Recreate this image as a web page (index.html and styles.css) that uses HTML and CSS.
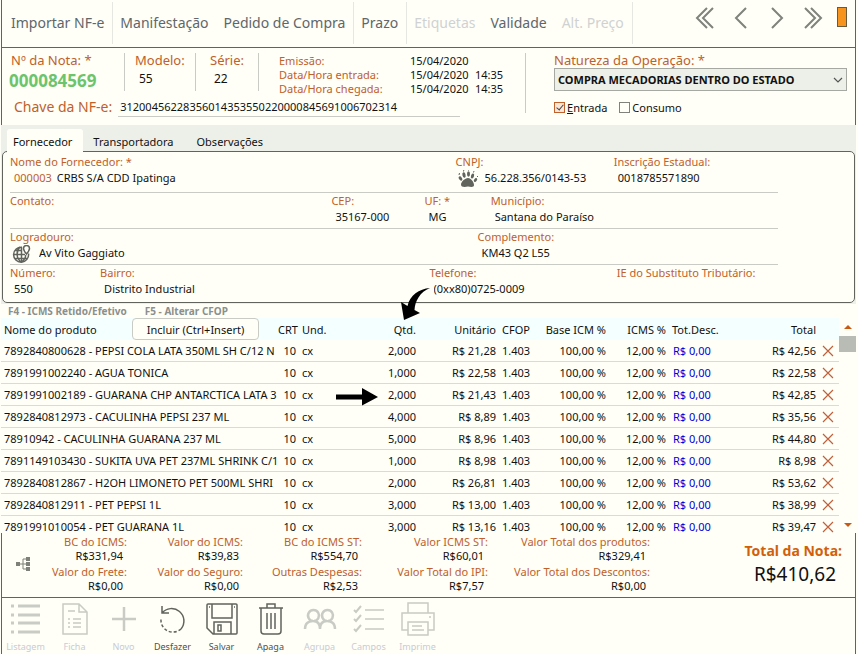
FILE: index.html
```html
<!DOCTYPE html>
<html lang="pt-BR">
<head>
    <meta charset="UTF-8">
    <meta name="viewport" content="width=device-width, initial-scale=1.0">
    <title>Nota Fiscal de Entrada</title>
    <link rel="stylesheet" href="styles.css">
</head>
<body>
    <!-- Shared icon for the delete buttons in the product rows -->
    <svg class="symbols" width="0" height="0">
        <symbol id="icon-delete" viewBox="0 0 12 12">
            <path d="M1 1L11 11M11 1L1 11" fill="none" stroke="#c0603a" stroke-width="1.2"/>
        </symbol>
    </svg>

    <div class="app">
        <!-- Top toolbar -->
        <header class="toolbar framed">
            <nav class="menu">
                <button class="menu-button">Importar NF-e</button>
                <button class="menu-button divided">Manifestação</button>
                <button class="menu-button">Pedido de Compra</button>
                <button class="menu-button divided">Prazo</button>
                <button class="menu-button divided" disabled>Etiquetas</button>
                <button class="menu-button">Validade</button>
                <button class="menu-button" disabled>Alt. Preço</button>
                <span class="menu-end"></span>
            </nav>
            <div class="pager">
                <button class="pager-button" aria-label="Primeiro">
                    <svg width="20" height="22" viewBox="0 0 20 22"><path d="M12 1L2 11L12 21M18 1L8 11L18 21"/></svg>
                </button>
                <button class="pager-button" aria-label="Anterior">
                    <svg width="20" height="22" viewBox="0 0 20 22"><path d="M15 1L5 11L15 21"/></svg>
                </button>
                <button class="pager-button" aria-label="Próximo">
                    <svg width="20" height="22" viewBox="0 0 20 22"><path d="M5 1L15 11L5 21"/></svg>
                </button>
                <button class="pager-button" aria-label="Último">
                    <svg width="20" height="22" viewBox="0 0 20 22"><path d="M2 1L12 11L2 21M8 1L18 11L8 21"/></svg>
                </button>
                <span class="marker"></span>
            </div>
        </header>

        <!-- Invoice data -->
        <section class="note framed">
            <div class="note-left">
                <div class="note-top">
                    <div class="note-field number">
                        <label class="big-label" for="nota">Nº da Nota: *</label>
                        <input class="note-number" id="nota" value="000084569">
                    </div>
                    <div class="note-field model">
                        <label class="big-label" for="modelo">Modelo:</label>
                        <input class="note-input" id="modelo" value="55">
                    </div>
                    <div class="note-field series">
                        <label class="big-label" for="serie">Série:</label>
                        <input class="note-input" id="serie" value="22">
                    </div>
                    <div class="dates">
                        <label for="emissao">Emissão:</label>
                        <input id="emissao" value="15/04/2020">
                        <span></span>
                        <label for="entrada-data">Data/Hora entrada:</label>
                        <input id="entrada-data" value="15/04/2020">
                        <input aria-label="Hora entrada" value="14:35">
                        <label for="chegada-data">Data/Hora chegada:</label>
                        <input id="chegada-data" value="15/04/2020">
                        <input aria-label="Hora chegada" value="14:35">
                    </div>
                </div>
                <div class="access-key">
                    <label class="big-label" for="chave">Chave da NF-e:</label>
                    <input id="chave" value="31200456228356014353550220000845691006702314">
                </div>
            </div>
            <div class="note-right">
                <label class="big-label" for="natureza">Natureza da Operação: *</label>
                <div class="select-box">
                    <select id="natureza">
                        <option>COMPRA MECADORIAS DENTRO DO ESTADO</option>
                    </select>
                    <svg class="select-arrow" width="10" height="6" viewBox="0 0 10 6"><path d="M1 1L5 5L9 1" fill="none" stroke="#555" stroke-width="1.2"/></svg>
                </div>
                <div class="checks">
                    <label class="check"><input type="checkbox" checked><span><u>E</u>ntrada</span></label>
                    <label class="check"><input type="checkbox"><span>Consumo</span></label>
                </div>
            </div>
        </section>

        <!-- Supplier tabs -->
        <section class="tabs-area">
            <div class="tabs" role="tablist">
                <button class="tab active" role="tab" aria-selected="true">Fornecedor</button>
                <button class="tab" role="tab">Transportadora</button>
                <button class="tab" role="tab">Observações</button>
            </div>
            <div class="panel">
                <div class="fields row-name">
                    <div class="field">
                        <label for="fornecedor">Nome do Fornecedor: *</label>
                        <div class="field-value">
                            <span class="code">000003</span>
                            <input id="fornecedor" value="CRBS S/A CDD Ipatinga">
                        </div>
                    </div>
                    <div class="field">
                        <label for="cnpj">CNPJ:</label>
                        <div class="field-value with-icon">
                            <svg class="field-icon" width="20" height="18" viewBox="0 0 20 18" fill="#60645c">
                                <path d="M10 8C13 8 16 12 16 15C16 17.500 13 17 10 16.500C7 17 3 17.500 3 14.500C3 12 7 8 10 8Z"/>
                                <ellipse cx="2.500" cy="8.500" rx="1.500" ry="2.300" transform="rotate(-35 2.500 8.500)"/>
                                <ellipse cx="6" cy="5" rx="1.600" ry="2.700" transform="rotate(-12 6 5)"/>
                                <ellipse cx="10.500" cy="4" rx="1.500" ry="2.800"/>
                                <ellipse cx="14.500" cy="6" rx="1.500" ry="2.600" transform="rotate(18 14.500 6)"/>
                                <ellipse cx="17.500" cy="10" rx="1.400" ry="2.200" transform="rotate(35 17.500 10)"/>
                                <path d="M1 5L1.500 3M5.500 1.500L5.800 0M10.500 .6V0M15.500 2.500L16 1M19 7L20 6" stroke="#60645c"/>
                            </svg>
                            <input id="cnpj" value="56.228.356/0143-53">
                        </div>
                    </div>
                    <div class="field">
                        <label for="inscricao">Inscrição Estadual:</label>
                        <div class="field-value"><input id="inscricao" value="0018785571890"></div>
                    </div>
                </div>
                <div class="fields row-city">
                    <div class="field">
                        <label for="contato">Contato:</label>
                        <div class="field-value"><input id="contato" value=""></div>
                    </div>
                    <div class="field">
                        <label for="cep">CEP:</label>
                        <div class="field-value"><input id="cep" value="35167-000"></div>
                    </div>
                    <div class="field">
                        <label for="uf">UF: *</label>
                        <div class="field-value"><input id="uf" value="MG"></div>
                    </div>
                    <div class="field">
                        <label for="municipio">Município:</label>
                        <div class="field-value"><input id="municipio" value="Santana do Paraíso"></div>
                    </div>
                </div>
                <div class="fields row-street">
                    <div class="field">
                        <label for="logradouro">Logradouro:</label>
                        <div class="field-value with-icon">
                            <svg class="field-icon" width="20" height="18" viewBox="0 0 20 18" fill="none" stroke="#60645c" stroke-width="1.500">
                                <path d="M10 2.200A7.500 7.500 0 1 0 16.500 8.500M9.500 2V17M2 9.500H13M3.500 5.500H10M3.500 13.500H15.500M8 2C4 6 4 13 9 17M10 17C13 14 14 12 13.500 10"/>
                                <path d="M14.500 9C12 6 11.500 5 11.500 3.500A3 3 0 0 1 17.500 3.500C17.500 5 17 6 14.500 9Z" fill="#fffff7"/>
                            </svg>
                            <input id="logradouro" value="Av Vito Gaggiato">
                        </div>
                    </div>
                    <div class="field">
                        <label for="complemento">Complemento:</label>
                        <div class="field-value"><input id="complemento" value="KM43 Q2 L55"></div>
                    </div>
                </div>
                <div class="fields row-phone">
                    <div class="field">
                        <label for="numero">Número:</label>
                        <div class="field-value"><input id="numero" value="550"></div>
                    </div>
                    <div class="field">
                        <label for="bairro">Bairro:</label>
                        <div class="field-value"><input id="bairro" value="Distrito Industrial"></div>
                    </div>
                    <div class="field">
                        <label for="telefone">Telefone:</label>
                        <div class="field-value"><input id="telefone" value="(0xx80)0725-0009"></div>
                    </div>
                    <div class="field">
                        <label for="substituto">IE do Substituto Tributário:</label>
                        <div class="field-value"><input id="substituto" value=""></div>
                    </div>
                </div>
            </div>
        </section>

        <div class="hints">
            <span>F4 - ICMS Retido/Efetivo</span>
            <span>F5 - Alterar CFOP</span>
        </div>

        <!-- Product grid -->
        <section class="grid">
            <!-- Arrows pointing at the quantity column -->
            <svg class="arrow-down" width="32" height="34" viewBox="0 0 32 34"><path d="M30 1C19 2 10 8 7.500 19L1 15L4 33L20 26L14.500 23C15 14 20 5 30 1Z"/></svg>
            <svg class="arrow-right" width="42" height="18" viewBox="0 0 42 18"><path d="M0 6.500H26V0L42 9L26 17.500V11.500H0Z"/></svg>
            <table class="products">
                <colgroup>
                    <col>
                    <col class="col-crt">
                    <col class="col-und">
                    <col class="col-qtd">
                    <col class="col-unit">
                    <col class="col-cfop">
                    <col class="col-base">
                    <col class="col-icms">
                    <col class="col-desc">
                    <col class="col-total">
                    <col class="col-delete">
                </colgroup>
                <thead>
                    <tr>
                        <th>
                            <div class="name-head">
                                <span>Nome do produto</span>
                                <button class="add-button">Incluir (Ctrl+Insert)</button>
                            </div>
                        </th>
                        <th class="num">CRT</th>
                        <th>Und.</th>
                        <th class="num">Qtd.</th>
                        <th class="num">Unitário</th>
                        <th>CFOP</th>
                        <th class="num">Base ICM %</th>
                        <th class="num">ICMS %</th>
                        <th>Tot.Desc.</th>
                        <th class="num">Total</th>
                        <th></th>
                    </tr>
                </thead>
                <tbody>
                    <tr>
                        <td>7892840800628 - PEPSI COLA LATA 350ML SH C/12 N</td><td class="num">10</td><td>cx</td><td class="num">2,000</td><td class="num">R$ 21,28</td><td>1.403</td><td class="num">100,00 %</td><td class="num">12,00 %</td><td class="discount">R$ 0,00</td><td class="num">R$ 42,56</td>
                        <td><button class="delete" aria-label="Excluir"><svg width="12" height="12"><use href="#icon-delete"/></svg></button></td>
                    </tr>
                    <tr>
                        <td>7891991002240 - AGUA TONICA</td><td class="num">10</td><td>cx</td><td class="num">1,000</td><td class="num">R$ 22,58</td><td>1.403</td><td class="num">100,00 %</td><td class="num">12,00 %</td><td class="discount">R$ 0,00</td><td class="num">R$ 22,58</td>
                        <td><button class="delete" aria-label="Excluir"><svg width="12" height="12"><use href="#icon-delete"/></svg></button></td>
                    </tr>
                    <tr>
                        <td>7891991002189 - GUARANA CHP ANTARCTICA LATA 3</td><td class="num">10</td><td>cx</td><td class="num">2,000</td><td class="num">R$ 21,43</td><td>1.403</td><td class="num">100,00 %</td><td class="num">12,00 %</td><td class="discount">R$ 0,00</td><td class="num">R$ 42,85</td>
                        <td><button class="delete" aria-label="Excluir"><svg width="12" height="12"><use href="#icon-delete"/></svg></button></td>
                    </tr>
                    <tr>
                        <td>7892840812973 - CACULINHA PEPSI 237 ML</td><td class="num">10</td><td>cx</td><td class="num">4,000</td><td class="num">R$ 8,89</td><td>1.403</td><td class="num">100,00 %</td><td class="num">12,00 %</td><td class="discount">R$ 0,00</td><td class="num">R$ 35,56</td>
                        <td><button class="delete" aria-label="Excluir"><svg width="12" height="12"><use href="#icon-delete"/></svg></button></td>
                    </tr>
                    <tr>
                        <td>78910942 - CACULINHA GUARANA 237 ML</td><td class="num">10</td><td>cx</td><td class="num">5,000</td><td class="num">R$ 8,96</td><td>1.403</td><td class="num">100,00 %</td><td class="num">12,00 %</td><td class="discount">R$ 0,00</td><td class="num">R$ 44,80</td>
                        <td><button class="delete" aria-label="Excluir"><svg width="12" height="12"><use href="#icon-delete"/></svg></button></td>
                    </tr>
                    <tr>
                        <td>7891149103430 - SUKITA UVA PET 237ML SHRINK C/1</td><td class="num">10</td><td>cx</td><td class="num">1,000</td><td class="num">R$ 8,98</td><td>1.403</td><td class="num">100,00 %</td><td class="num">12,00 %</td><td class="discount">R$ 0,00</td><td class="num">R$ 8,98</td>
                        <td><button class="delete" aria-label="Excluir"><svg width="12" height="12"><use href="#icon-delete"/></svg></button></td>
                    </tr>
                    <tr>
                        <td>7892840812867 - H2OH LIMONETO PET 500ML SHRI</td><td class="num">10</td><td>cx</td><td class="num">2,000</td><td class="num">R$ 26,81</td><td>1.403</td><td class="num">100,00 %</td><td class="num">12,00 %</td><td class="discount">R$ 0,00</td><td class="num">R$ 53,62</td>
                        <td><button class="delete" aria-label="Excluir"><svg width="12" height="12"><use href="#icon-delete"/></svg></button></td>
                    </tr>
                    <tr>
                        <td>7892840812911 - PET PEPSI 1L</td><td class="num">10</td><td>cx</td><td class="num">3,000</td><td class="num">R$ 13,00</td><td>1.403</td><td class="num">100,00 %</td><td class="num">12,00 %</td><td class="discount">R$ 0,00</td><td class="num">R$ 38,99</td>
                        <td><button class="delete" aria-label="Excluir"><svg width="12" height="12"><use href="#icon-delete"/></svg></button></td>
                    </tr>
                    <tr>
                        <td>7891991010054 - PET GUARANA 1L</td><td class="num">10</td><td>cx</td><td class="num">3,000</td><td class="num">R$ 13,16</td><td>1.403</td><td class="num">100,00 %</td><td class="num">12,00 %</td><td class="discount">R$ 0,00</td><td class="num">R$ 39,47</td>
                        <td><button class="delete" aria-label="Excluir"><svg width="12" height="12"><use href="#icon-delete"/></svg></button></td>
                    </tr>
                </tbody>
            </table>
            <div class="scrollbar">
                <svg width="8" height="4" viewBox="0 0 8 4"><path d="M0 4L4 0L8 4Z" fill="#c85a14"/></svg>
                <span class="thumb"></span>
                <svg class="scroll-down" width="8" height="4" viewBox="0 0 8 4"><path d="M0 0L4 4L8 0Z" fill="#c85a14"/></svg>
            </div>
        </section>

        <!-- Totals -->
        <section class="totals framed">
            <svg class="tree-icon" width="14" height="14" viewBox="0 0 14 14">
                <path d="M3 7H10M7 2V12M7 2H10M7 12H10" fill="none" stroke="#7d8179"/>
                <path d="M0 5H4V9H0ZM10 0H14V4H10ZM10 5H14V9H10ZM10 10H14V14H10Z" fill="#7d8179"/>
            </svg>
            <dl class="totals-grid">
                <div><dt>BC do ICMS:</dt><dd>R$331,94</dd></div>
                <div><dt>Valor do ICMS:</dt><dd>R$39,83</dd></div>
                <div><dt>BC do ICMS ST:</dt><dd>R$554,70</dd></div>
                <div><dt>Valor ICMS ST:</dt><dd>R$60,01</dd></div>
                <div><dt>Valor Total dos produtos:</dt><dd>R$329,41</dd></div>
                <div><dt>Valor do Frete:</dt><dd>R$0,00</dd></div>
                <div><dt>Valor do Seguro:</dt><dd>R$0,00</dd></div>
                <div><dt>Outras Despesas:</dt><dd>R$2,53</dd></div>
                <div><dt>Valor Total do IPI:</dt><dd>R$7,57</dd></div>
                <div><dt>Valor Total dos Descontos:</dt><dd>R$0,00</dd></div>
            </dl>
            <div class="grand-total">
                <div class="grand-label">Total da Nota:</div>
                <div class="grand-value">R$410,62</div>
            </div>
        </section>

        <!-- Bottom actions -->
        <footer class="actions framed">
            <button class="action" disabled>
                <svg width="34" height="34" viewBox="0 0 34 34"><path d="M2 4H5M2 13H5M2 21H5M2 30H5M9 4H31M9 13H31M9 21H31M9 30H31" stroke-width="3"/></svg>
                Listagem
            </button>
            <button class="action" disabled>
                <svg width="34" height="34" viewBox="0 0 34 34"><path d="M5 2H21L29 10V32H5ZM21 2V10H29M10 9H17M15 17H23M15 21H23M15 25H23M10 17H12M10 21H12M10 25H12"/></svg>
                Ficha
            </button>
            <button class="action" disabled>
                <svg width="34" height="34" viewBox="0 0 34 34"><path d="M17 5V29M5 17H29" stroke-width="2.500"/></svg>
                Novo
            </button>
            <button class="action">
                <svg width="34" height="34" viewBox="0 0 34 34"><path d="M6 11A12 12 0 1 1 25 27M6 4V11H13"/><path d="M25 27A12 12 0 0 1 5 17" stroke-dasharray="3 2"/></svg>
                Desfazer
            </button>
            <button class="action">
                <svg width="34" height="34" viewBox="0 0 34 34"><path d="M3 2H31Q32 2 32 3V31Q32 32 31 32H8L2 26V3Q2 2 3 2ZM7 2V16H27V2M9 32V20H26V32M13 23H16V29H13ZM4 5H5M29 5H30"/></svg>
                Salvar
            </button>
            <button class="action">
                <svg width="34" height="34" viewBox="0 0 34 34"><path d="M5 6H29M7 6V29Q7 32 10 32H24Q27 32 27 29V6M13 6V2H21V6M13 11V27M17 11V27M21 11V27"/></svg>
                Apaga
            </button>
            <button class="action" disabled>
                <svg width="34" height="34" viewBox="0 0 34 34"><path d="M2 27C2 21 6 19 10 19C14 19 17 21 17 27C17 21 20 19 24 19C28 19 32 21 32 27M10 19A5.500 5.500 0 1 1 11 19M24 19A5.500 5.500 0 1 1 25 19" stroke-width="2.500"/></svg>
                Agrupa
            </button>
            <button class="action" disabled>
                <svg width="34" height="34" viewBox="0 0 34 34"><path d="M13 8H32M13 17H32M13 27H32"/><path d="M2 8L4 10L9 4M2 17L4 19L9 13M2 27L4 29L9 23" stroke-width="2"/></svg>
                Campos
            </button>
            <button class="action" disabled>
                <svg width="34" height="34" viewBox="0 0 34 34"><path d="M7 11V1H27V11M7 28H1V11H33V28H27M7 20H27V33H7ZM11 24H21M11 28H23M28 15H30"/></svg>
                Imprime
            </button>
        </footer>
    </div>
</body>
</html>
```

FILE: styles.css
```css
* {
    box-sizing: border-box;
}

body {
    margin: 0;
    background: #fffff7;
    color: #111;
    font-family: "Noto Sans", "Open Sans", sans-serif;
    font-size: 11px;
}

button,
input,
select {
    font: inherit;
    color: inherit;
    margin: 0;
    padding: 0;
    border: 0;
    background: none;
}

input {
    min-width: 0;
    width: 100%;
    height: 16px;
}

svg {
    display: block;
}

.symbols {
    position: absolute;
}

.app {
    display: flex;
    flex-direction: column;
    height: 100vh;
    padding: 0 2px 0 1px;
}

/* Sections drawn inside the window frame */
.framed {
    border: 0 solid #60645c;
    border-left-width: 1px;
    border-right-width: 1px;
}

/* Top toolbar */
.toolbar {
    display: flex;
    justify-content: space-between;
    height: 48px;
    padding: 2px 8px 3px 2px;
    border-bottom-width: 1px;
}

.menu {
    display: flex;
}

.menu-button {
    padding: 0 8px 1px 7px;
    font-size: 14px;
    color: #60666a;
}

.menu-button:disabled {
    color: #cfd2d3;
}

.divided,
.menu-end {
    border-left: 1px solid #e6e7e0;
}

.pager {
    display: flex;
    align-items: flex-start;
    gap: 16px;
    padding-top: 5px;
}

.pager-button path {
    fill: none;
    stroke: #7f837c;
    stroke-width: 2;
}

.marker {
    width: 10px;
    height: 20px;
    margin-left: -2px;
    background: #f7941d;
    border: 1px solid #6b5a3a;
}

/* Invoice data */
.note {
    display: flex;
    padding: 5px 8px 6px 7px;
    height: 77px;
}

.big-label {
    display: block;
    font-size: 13px;
    line-height: 14px;
    color: #c0602a;
    white-space: nowrap;
}

.note-left {
    flex: 0 0 517px;
    height: 60px;
    border-right: 1px solid #c9ccc4;
}

.note-top {
    display: flex;
}

.note-field {
    height: 38px;
    border-right: 1px solid #c9ccc4;
}

.number {
    width: 116px;
}

.number .big-label {
    padding-left: 2px;
}

.note-number {
    height: 26px;
    font-size: 17px;
    font-weight: bold;
    color: #6cc46c;
}

.model {
    width: 71px;
    padding-left: 10px;
}

.series {
    width: 63px;
    padding-left: 14px;
}

.note-input {
    height: 22px;
    padding-left: 4px;
    font-size: 12px;
}

.dates {
    display: grid;
    grid-template-columns: 131px 65px 36px;
    grid-auto-rows: 14px;
    padding-left: 20px;
    color: #c0602a;
}

.dates input {
    height: 14px;
    color: #111;
}

.access-key {
    display: flex;
    align-items: center;
    gap: 6px;
    height: 23px;
    padding: 0 65px 0 5px;
}

.access-key .big-label {
    font-size: 14px;
}

.access-key input {
    flex: 1;
    height: 21px;
    padding-left: 2px;
    border-bottom: 1px solid #c9ccc4;
}

.note-right {
    flex: 1;
    padding-left: 28px;
}

.select-box {
    position: relative;
    margin-top: 1px;
}

.select-box select {
    width: 100%;
    height: 23px;
    padding-left: 3px;
    appearance: none;
    background: #edf0e8;
    border: 1px solid #a5a9a1;
    border-radius: 0;
    font-weight: bold;
}

.select-arrow {
    position: absolute;
    right: 4px;
    top: 9px;
}

.checks {
    display: flex;
    gap: 12px;
    margin-top: 9px;
}

.check {
    display: flex;
    align-items: center;
    gap: 2px;
}

.check input {
    width: 11px;
    height: 11px;
    appearance: none;
    border: 1px solid #7f837c;
}

.check input:checked {
    border-color: #c0602a;
    background: #fbe6d8;
}

.check input:checked::after {
    content: "";
    display: block;
    width: 3px;
    height: 6px;
    margin: 0 3px;
    border: solid #444;
    border-width: 0 1px 1px 0;
    transform: rotate(40deg);
}

/* Supplier tabs */
.tabs-area {
    padding: 4px 1px 1px;
    background: #edf0e8;
}

.tabs {
    display: flex;
    padding-left: 5px;
}

.tab {
    height: 24px;
    padding: 0 10px;
    margin-right: 3px;
}

.tab.active {
    position: relative;
    padding: 0 11px 0 6px;
    margin-right: 0;
    background: #fffff7;
    border-radius: 3px 3px 0 0;
}

.panel {
    margin-top: -2px;
    padding: 2px 76px 0 7px;
    background: #fffff7;
    border: 1px solid #60645c;
    border-radius: 5px;
}

.fields {
    display: grid;
    height: 36px;
    border-bottom: 1px solid #c9ccc4;
}

.field label {
    display: block;
    line-height: 15px;
    color: #c0602a;
    white-space: nowrap;
}

.field-value {
    display: flex;
    align-items: center;
    gap: 5px;
    height: 16px;
    padding-left: 4px;
}

.with-icon {
    gap: 7px;
    padding-left: 2px;
}

.code {
    color: #c0602a;
}

/* Icons hang slightly below the text line to clear the label */
.field-icon {
    flex: none;
    margin-top: 4px;
}

.row-name {
    grid-template-columns: 445fr 158fr 164fr;
    height: 39px;
}

.row-city {
    grid-template-columns: 321fr 93fr 66fr 287fr;
}

.row-street {
    grid-template-columns: 467fr 300fr;
}

.row-phone {
    grid-template-columns: 90fr 329fr 187fr 161fr;
    height: 37px;
    border-bottom: 0;
}

.hints {
    display: flex;
    gap: 18px;
    padding-left: 7px;
    font-size: 10px;
    line-height: 14px;
    font-weight: bold;
    color: #8b8f8d;
}

/* Product grid */
.grid {
    position: relative;
    display: flex;
    flex: 1;
    min-height: 0;
}

.products {
    flex: 1;
    align-self: flex-start;
    width: 100%;
    table-layout: fixed;
    border-collapse: separate;
    border-spacing: 0;
}

.col-crt { width: 21px; }
.col-und { width: 41px; }
.col-qtd { width: 79px; }
.col-unit { width: 80px; }
.col-cfop { width: 41px; }
.col-base { width: 69px; }
.col-icms { width: 60px; }
.col-desc { width: 70px; }
.col-total { width: 80px; }
.col-delete { width: 20px; }

.products th,
.products td {
    height: 22px;
    padding: 0 3px;
    text-align: left;
    font-weight: normal;
    white-space: nowrap;
}

.products th {
    background: #f4ffff;
}

.products td {
    overflow: hidden;
    border-bottom: 1px solid #d9dcd4;
}

.products th:first-child,
.products td:first-child {
    padding-right: 0;
}

.products .num {
    padding-left: 0;
    text-align: right;
}

.products .discount {
    padding-left: 4px;
    color: #0000e0;
}

.name-head {
    display: flex;
    align-items: center;
    justify-content: space-between;
    padding-right: 19px;
}

.add-button {
    width: 127px;
    height: 22px;
    background: #fffff7;
    border: 1px solid #c9ccc4;
    border-radius: 4px;
}

.delete {
    display: block;
}

.scrollbar {
    display: flex;
    flex-direction: column;
    align-items: center;
    flex: none;
    width: 17px;
    padding: 7px 0 6px;
}

.thumb {
    width: 17px;
    height: 16px;
    margin-top: 7px;
    background: #b9bcb4;
}

.scroll-down {
    margin-top: auto;
}

.arrow-down {
    position: absolute;
    left: 399px;
    top: -31px;
}

.arrow-right {
    position: absolute;
    left: 335px;
    top: 70px;
}

/* Totals */
.totals {
    position: relative;
    display: flex;
    align-items: center;
    height: 65px;
    padding: 0 13px 2px 14px;
    background: #fffff7;
    border-bottom-width: 1px;
}

.totals-grid {
    display: grid;
    grid-template-columns: 97px 116px 119px 126px 162px;
    row-gap: 2px;
    margin: 0;
    text-align: right;
    line-height: 14px;
    white-space: nowrap;
}

.totals-grid dt {
    color: #c0602a;
}

.totals-grid dd {
    margin: 0;
    padding-right: 4px;
}

.grand-total {
    margin-left: auto;
    text-align: right;
}

.grand-label {
    font-size: 14px;
    line-height: 20px;
    font-weight: bold;
    color: #d2600a;
}

.grand-value {
    padding-right: 6px;
    font-size: 19px;
    line-height: 26px;
}

/* Bottom actions */
.actions {
    display: flex;
    height: 56px;
}

.action {
    display: flex;
    flex-direction: column;
    align-items: center;
    gap: 4px;
    width: 49px;
    padding: 4px 2px 0 0;
    font-size: 9px;
    line-height: 14px;
    color: #4c5054;
}

.action svg {
    fill: none;
    stroke: #60645c;
    stroke-width: 1.5;
}

.action:disabled {
    color: #c9cbd6;
}

.action:disabled svg {
    stroke: #c9ccc4;
}
```
